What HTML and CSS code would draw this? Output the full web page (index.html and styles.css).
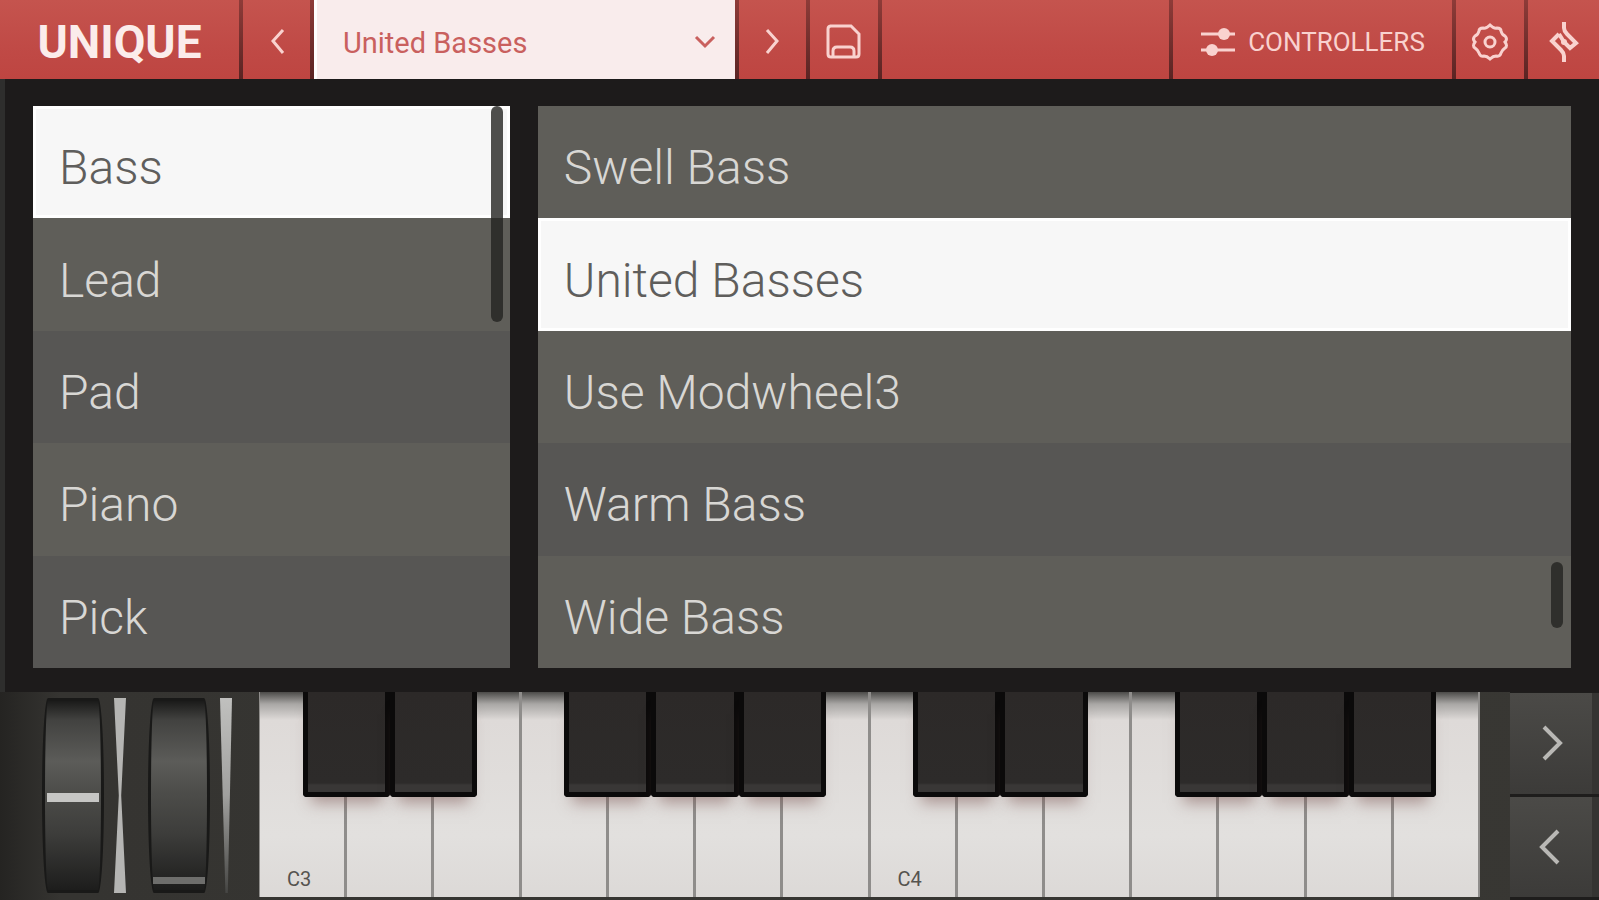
FILE: index.html
```
<!DOCTYPE html>
<html lang="en">
<head>
    <meta charset="UTF-8">
    <title>Unique</title>
    <link rel="stylesheet" href="styles.css">
</head>
<body>
    <header class="toolbar">
        <h1>UNIQUE</h1>
        <button type="button" aria-label="Previous preset">
            <svg width="24" height="32" viewBox="0 0 24 32"><path d="M18 4 L8 15 L18 27"/></svg>
        </button>
        <div class="preset">
            <select aria-label="Preset">
                <option>Swell Bass</option>
                <option selected>United Basses</option>
                <option>Use Modwheel3</option>
                <option>Warm Bass</option>
                <option>Wide Bass</option>
            </select>
            <svg width="24" height="16" viewBox="0 0 24 16"><path d="M3 3 L12 12 L21 3"/></svg>
        </div>
        <button type="button" aria-label="Next preset">
            <svg width="24" height="32" viewBox="0 0 24 32"><path d="M6 4 L16 15 L6 27"/></svg>
        </button>
        <button type="button" aria-label="Save">
            <svg width="40" height="40" viewBox="0 0 40 40"><path d="M6 4 H27 L35 12 V32 Q35 35 32 35 H7 Q4 35 4 32 V7 Q4 4 7 4 M9 34 V29 Q9 25 13 25 H26 Q30 25 30 29 V34"/></svg>
        </button>
        <div class="blank"></div>
        <button type="button" class="controllers">
            <svg width="36" height="36" viewBox="0 0 36 36"><path d="M1 10 H35 M1 26 H35"/><circle cx="24" cy="10" r="6"/><circle cx="12" cy="26" r="6"/></svg>
            CONTROLLERS
        </button>
        <button type="button" aria-label="Settings">
            <svg width="40" height="40" viewBox="0 0 40 40"><path d="M20 3 Q24 7 27 6 Q31 6 31 9 Q32 13 35 14 Q38 17 35 20 Q38 24 35 26 Q32 28 31 31 Q30 35 26 34 Q23 34 20 37 Q17 34 14 34 Q10 35 9 31 Q8 28 5 26 Q2 24 5 20 Q2 17 5 14 Q8 13 9 9 Q9 6 13 6 Q16 7 20 3 Z"/><circle cx="20" cy="20" r="5"/></svg>
        </button>
        <button type="button" aria-label="About">
            <svg class="mark" width="32" height="44" viewBox="0 0 32 44"><path d="M16 2 V8 Q16 11 19 14 L28 23 L22 28 L16 22 M16 42 V36 Q16 33 13 30 L4 21 L11 14 M11 14 L16 22"/><circle cx="16" cy="22" r="3"/></svg>
        </button>
    </header>

    <main class="browser">
        <div class="list categories">
            <ul>
                <li><button type="button" class="selected">Bass</button></li>
                <li><button type="button">Lead</button></li>
                <li><button type="button">Pad</button></li>
                <li><button type="button">Piano</button></li>
                <li><button type="button">Pick</button></li>
            </ul>
            <div class="scroll scroll-top"></div>
        </div>
        <div class="list presets">
            <ul>
                <li><button type="button">Swell Bass</button></li>
                <li><button type="button" class="selected">United Basses</button></li>
                <li><button type="button">Use Modwheel3</button></li>
                <li><button type="button" class="dark">Warm Bass</button></li>
                <li><button type="button">Wide Bass</button></li>
            </ul>
            <div class="scroll scroll-end"></div>
        </div>
    </main>

    <footer class="keyboard">
        <div class="wheels">
            <input type="range" class="pitch" aria-label="Pitch bend" min="0" max="100" value="49">
            <div class="strip strip-pitch"></div>
            <input type="range" class="mod" aria-label="Modulation" min="0" max="100" value="0">
            <div class="strip strip-mod"></div>
        </div>
        <div class="keys">
            <div class="key"><button type="button" class="white">C3</button><button type="button" class="black" aria-label="C#3"></button></div>
            <div class="key"><button type="button" class="white" aria-label="D3"></button><button type="button" class="black" aria-label="D#3"></button></div>
            <div class="key"><button type="button" class="white" aria-label="E3"></button></div>
            <div class="key"><button type="button" class="white" aria-label="F3"></button><button type="button" class="black" aria-label="F#3"></button></div>
            <div class="key"><button type="button" class="white" aria-label="G3"></button><button type="button" class="black" aria-label="G#3"></button></div>
            <div class="key"><button type="button" class="white" aria-label="A3"></button><button type="button" class="black" aria-label="A#3"></button></div>
            <div class="key"><button type="button" class="white" aria-label="B3"></button></div>
            <div class="key"><button type="button" class="white">C4</button><button type="button" class="black" aria-label="C#4"></button></div>
            <div class="key"><button type="button" class="white" aria-label="D4"></button><button type="button" class="black" aria-label="D#4"></button></div>
            <div class="key"><button type="button" class="white" aria-label="E4"></button></div>
            <div class="key"><button type="button" class="white" aria-label="F4"></button><button type="button" class="black" aria-label="F#4"></button></div>
            <div class="key"><button type="button" class="white" aria-label="G4"></button><button type="button" class="black" aria-label="G#4"></button></div>
            <div class="key"><button type="button" class="white" aria-label="A4"></button><button type="button" class="black" aria-label="A#4"></button></div>
            <div class="key"><button type="button" class="white" aria-label="B4"></button></div>
        </div>
        <div class="octaves">
            <button type="button" aria-label="Octave up">
                <svg width="24" height="40" viewBox="0 0 24 40"><path d="M5 4 L21 20 L5 36"/></svg>
            </button>
            <button type="button" aria-label="Octave down">
                <svg width="24" height="40" viewBox="0 0 24 40"><path d="M19 4 L3 20 L19 36"/></svg>
            </button>
        </div>
    </footer>
</body>
</html>
```
FILE: styles.css
```
* {
    box-sizing: border-box;
}

body, ul, li, h1 {
    margin: 0;
    padding: 0;
}

body {
    display: grid;
    grid-template-rows: 79px 1fr 208px;
    height: 100vh;
    min-height: 640px;
    background: #1d1b1b;
    font-family: Roboto, "Liberation Sans", sans-serif;
}

button, select {
    margin: 0;
    padding: 0;
    border: none;
    border-radius: 0;
    font-family: inherit;
    cursor: pointer;
}

svg {
    fill: none;
    stroke: currentColor;
    stroke-width: 3;
}

/* top bar */
.toolbar {
    display: grid;
    grid-template-columns: 239px 67px 421px 67px 68px 1fr 279px 68px 71px;
    gap: 4px;
    background: linear-gradient(#8e3b38, #5a2423);
}

.toolbar h1, .toolbar button, .blank {
    display: flex;
    align-items: center;
    justify-content: center;
    padding-top: 4px;
    background: linear-gradient(#c5544e, #c04a46 60%, #be4541);
    color: #f9d2cf;
}

.toolbar h1 {
    font-size: 46px;
    line-height: 56px;
    color: #fbeceb;
}

.toolbar .controllers {
    gap: 12px;
    font-size: 26px;
}

.controllers circle, .mark circle {
    fill: currentColor;
    stroke: none;
}

.mark {
    stroke-width: 4;
}

.preset {
    position: relative;
    color: #c9605e;
}

.preset select {
    appearance: none;
    width: 100%;
    height: 100%;
    padding: 6px 60px 0 26px;
    border-left: 3px solid #fff;
    background: #f9ecec;
    color: inherit;
    font-size: 29px;
}

.preset svg {
    position: absolute;
    right: 18px;
    top: 34px;
    pointer-events: none;
}

/* category and preset lists */
.browser {
    display: grid;
    grid-template-columns: 6fr 13fr;
    gap: 28px;
    padding: 27px 28px 24px 28px;
    border-left: 5px solid #2e2e2d;
}

.list {
    position: relative;
    min-height: 0;
}

.list ul {
    display: grid;
    grid-template-rows: repeat(5, 1fr);
    height: 100%;
    list-style: none;
}

.list button {
    width: 100%;
    height: 100%;
    padding: 11px 26px 0;
    background: #5f5e59;
    color: #d8d7d4;
    font-size: 48px;
    font-weight: 300;
    text-align: left;
}

.categories li:nth-child(odd) button, .presets .dark {
    background: #575654;
}

.list li .selected, .categories li:nth-child(odd) .selected {
    background: #f7f7f7;
    color: #5f5e5c;
    box-shadow: inset 0 0 0 3px #fff;
}

.scroll {
    position: absolute;
    width: 12px;
    border-radius: 6px;
    background: rgba(35, 35, 33, 0.8);
}

.scroll-top {
    top: 0;
    right: 7px;
    height: 216px;
}

.scroll-end {
    right: 8px;
    bottom: 40px;
    height: 66px;
}

/* wheels and keys */
.keyboard {
    display: grid;
    grid-template-columns: 259px 1fr 89px;
    background: linear-gradient(90deg, #252422, #353431 60px, #383733);
}

.wheels {
    display: flex;
    gap: 10px;
    padding: 6px 0 6px 42px;
}

.wheels input {
    appearance: none;
    writing-mode: vertical-lr;
    direction: rtl;
    width: 62px;
    height: 195px;
    margin: 0;
    padding: 6px 4px;
    border: 3px solid #191918;
    border-radius: 6px / 50%;
    background: linear-gradient(#1b1b1a, #424240 10%, #5c5c59 32%, #4d4d4a 48%, #3d3d3b 70%, #1d1d1c);
}

.wheels input::-webkit-slider-thumb {
    appearance: none;
    width: 52px;
    height: 9px;
    background: #c6c6c4;
}

.wheels .mod::-webkit-slider-thumb {
    height: 7px;
    background: #6e6e6c;
}

.strip {
    width: 12px;
    height: 195px;
    margin-right: 12px;
    background: #b5b5b3;
}

.strip-pitch {
    clip-path: polygon(0 0, 100% 0, 60% 50%, 100% 100%, 0 100%, 40% 50%);
}

.strip-mod {
    background: linear-gradient(#c0c0be, #a0a09e 50%, #454543);
    clip-path: polygon(0 0, 100% 0, 65% 100%, 45% 100%);
}

.keys {
    display: grid;
    grid-template-columns: repeat(14, 1fr);
    margin: 0 30px 3px 0;
    background: #1d1c1b;
}

.key {
    position: relative;
}

.white {
    display: flex;
    align-items: flex-end;
    width: 100%;
    height: 100%;
    padding: 0 0 6px 27px;
    border: solid #8f8d8b;
    border-width: 0 2px 0 1px;
    background: linear-gradient(#4c4b49, #a9a7a5 12px, #dedad8 28px, #e2e0de 70%, #dcd9d7);
    color: #55534f;
    font-size: 20px;
}

.black {
    position: absolute;
    z-index: 1;
    top: 0;
    left: 50%;
    width: 100%;
    height: 105px;
    border: 5px solid #0b0a0a;
    border-top: none;
    border-radius: 0 0 4px 4px;
    background: linear-gradient(#2c2928, #2d2b2a 91%, #393736 93%);
    box-shadow: 0 14px 14px -8px rgba(120, 80, 75, 0.5);
}

.octaves {
    display: grid;
    grid-template-rows: 1fr 1fr;
    gap: 3px;
    padding: 1px 0 3px;
    background: #1e1d1c;
}

.octaves button {
    display: flex;
    align-items: center;
    justify-content: center;
    border-right: 7px solid #353432;
    background: linear-gradient(#4b4a47, #3c3b39);
    color: #b9b8b5;
}

.octaves svg {
    stroke-width: 4;
}
```
